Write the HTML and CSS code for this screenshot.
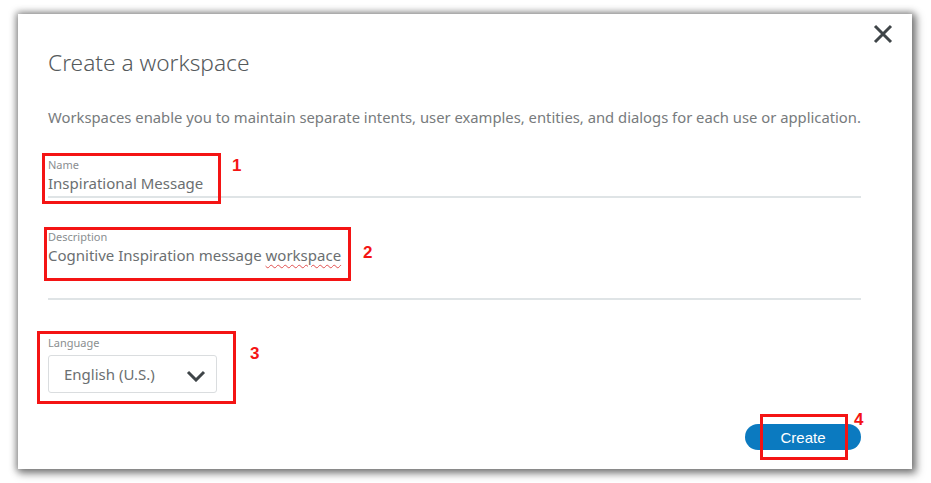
FILE: index.html
```html
<!DOCTYPE html>
<html>
<head>
<meta charset="utf-8">
<link rel="stylesheet" href="styles.css">
</head>
<body>
<div class="dialog">
  <button class="close" aria-label="Close">
    <svg width="20" height="20" viewBox="0 0 20 20"><path d="M2 2 L18 18 M18 2 L2 18" stroke="#3f4548" stroke-width="3" fill="none"/></svg>
  </button>
  <h1 class="title">Create a workspace</h1>
  <p class="intro">Workspaces enable you to maintain separate intents, user examples, entities, and dialogs for each use or application.</p>
  <div class="field name-field">
    <div class="label">Name</div>
    <div class="value">Inspirational Message</div>
  </div>
  <div class="field desc-field">
    <div class="label">Description</div>
    <div class="value">Cognitive Inspiration message <span class="spell">workspace</span></div>
  </div>
  <div class="lang">
    <div class="label">Language</div>
    <div class="select">
      <span>English (U.S.)</span>
      <svg class="chev" width="20" height="12" viewBox="0 0 20 12"><path d="M2 2 L10 10 L18 2" stroke="#3f4548" stroke-width="3" fill="none"/></svg>
    </div>
  </div>
  <div class="actions">
    <button class="create">Create</button>
  </div>

  <div class="mark mark1"></div><span class="num num1">1</span>
  <div class="mark mark2"></div><span class="num num2">2</span>
  <div class="mark mark3"></div><span class="num num3">3</span>
  <div class="mark mark4"></div><span class="num num4">4</span>
</div>
</body>
</html>
```
FILE: styles.css
```css
html, body {
  margin: 0;
  padding: 0;
  background: #fff;
}
body {
  font-family: "Noto Sans", "Open Sans", sans-serif;
  width: 931px;
  height: 483px;
  overflow: hidden;
}
.dialog {
  position: relative;
  margin: 14px 0 0 18px;
  width: 894px;
  height: 455px;
  box-sizing: border-box;
  padding: 34px 51px 0 30px;
  background: #fff;
  box-shadow: 0 0 7px 2px rgba(0,0,0,0.35), 3px 3px 8px 2px rgba(0,0,0,0.35);
  display: flex;
  flex-direction: column;
}
.close {
  position: absolute;
  top: 10px;
  right: 19px;
  border: 0;
  background: none;
  padding: 0;
  width: 20px;
  height: 20px;
}
.close svg { display: block; }
.title {
  margin: 0;
  font-size: 22.7px;
  font-weight: 300;
  line-height: 30px;
  color: #555a5c;
}
.intro {
  margin: 29px 0 0;
  font-size: 14.8px;
  line-height: 20px;
  color: #777b7d;
  white-space: nowrap;
}
.field {
  border-bottom: 2px solid #dfe4e6;
}
.name-field {
  margin-top: 31px;
  padding-bottom: 2px;
}
.desc-field {
  margin-top: 32px;
  height: 68px;
}
.label {
  font-size: 11px;
  line-height: 14px;
  color: #8a8e90;
}
.value {
  font-size: 15px;
  line-height: 22px;
  color: #6b6f71;
}
.spell {
  text-decoration: underline wavy #e05050 1px;
  text-underline-offset: 3px;
}
.lang {
  margin-top: 36px;
}
.lang .label { margin-bottom: 5px; }
.select {
  width: 169px;
  height: 38px;
  box-sizing: border-box;
  border: 1px solid #dadddf;
  border-radius: 3px;
  display: flex;
  align-items: center;
  justify-content: space-between;
  padding: 0 10px 0 15px;
  font-size: 15px;
  color: #6b6f71;
}
.chev { display: block; margin-top: 3px; }
.actions {
  margin-top: 31px;
  display: flex;
  justify-content: flex-end;
}
.create {
  width: 116px;
  height: 26px;
  border: 0;
  border-radius: 13px;
  background: #0b7ac0;
  color: #fff;
  font-family: "Liberation Sans", Arial, sans-serif;
  font-size: 15px;
  padding: 0;
}
.mark {
  position: absolute;
  border: 3px solid #f41414;
  box-sizing: border-box;
}
.mark1 { left: 24px; top: 139px; width: 179px; height: 51px; }
.mark2 { left: 26px; top: 213px; width: 307px; height: 54px; }
.mark3 { left: 19px; top: 317px; width: 199px; height: 73px; }
.mark4 { left: 742px; top: 400px; width: 88px; height: 46px; }
.num {
  position: absolute;
  font-family: "Liberation Sans", Arial, sans-serif;
  font-weight: bold;
  font-size: 17px;
  line-height: 17px;
  color: #f41414;
}
.num1 { left: 214px; top: 143px; }
.num2 { left: 345px; top: 230px; }
.num3 { left: 232px; top: 331px; }
.num4 { left: 836px; top: 397px; }
```
